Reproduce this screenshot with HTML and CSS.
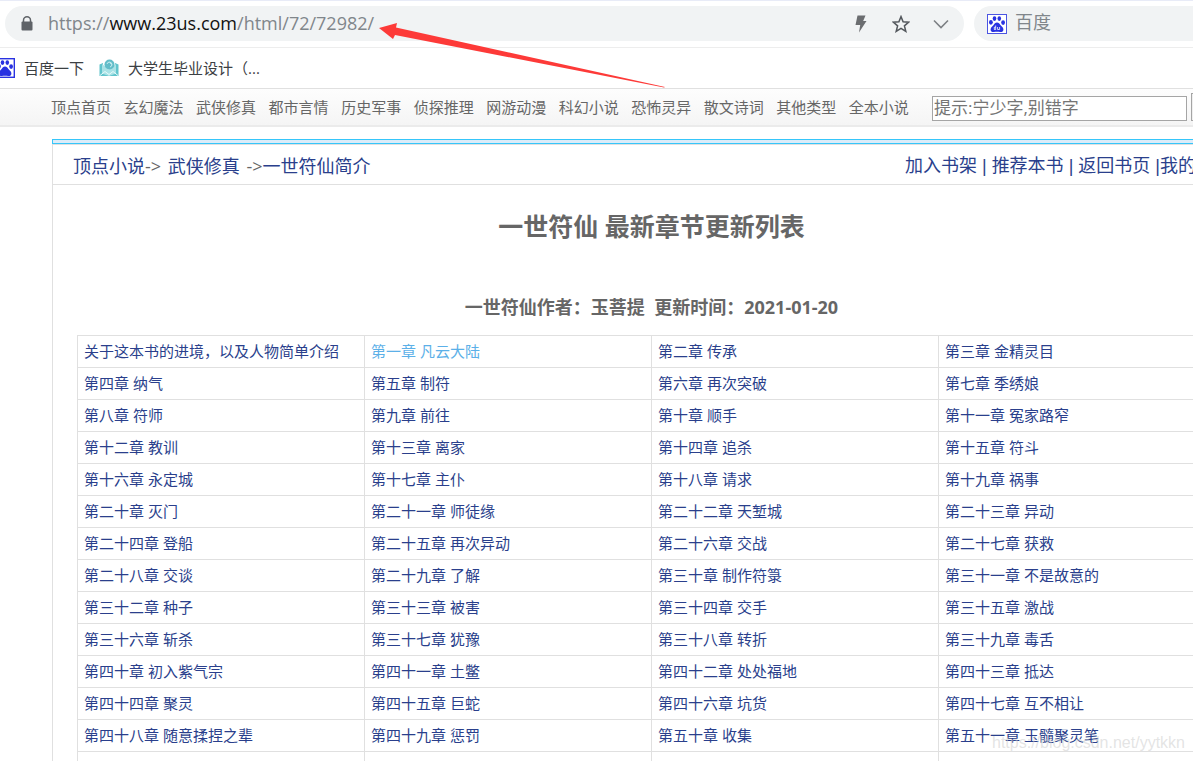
FILE: index.html
```html
<!DOCTYPE html>
<html lang="zh-CN">
<head>
<meta charset="utf-8">
<title>一世符仙 最新章节更新列表</title>
<link rel="stylesheet" href="styles.css">
</head>
<body>
<svg class="defs" aria-hidden="true">
  <symbol id="paw" viewBox="0 0 20 20">
    <ellipse cx="3.9" cy="8.3" rx="1.9" ry="2.4"/>
    <ellipse cx="7.5" cy="4.6" rx="1.8" ry="2.4"/>
    <ellipse cx="12.3" cy="4.6" rx="1.8" ry="2.4"/>
    <ellipse cx="16.1" cy="8.6" rx="1.9" ry="2.4"/>
    <path d="M10 8.6c1.700 0 2.500 1.200 3.400 2.400 1.100 1.400 3 2.400 3 4.400 0 2.100-1.600 2.700-3.300 2.500-1.100-.1-2-.2-3.100-.2s-2 .1-3.100.2c-1.700.2-3.300-.4-3.300-2.500 0-2 1.900-3 3-4.400.9-1.200 1.700-2.400 3.400-2.400z"/>
  </symbol>
</svg>

<header class="browser">
  <div class="toolbar">
    <div class="address">
      <svg class="lock" viewBox="0 0 12 15" aria-hidden="true"><path d="M2.500 6V4.300a3.500 3.500 0 0 1 7 0V6" fill="none" stroke="#5f6368" stroke-width="1.500"/><rect x=".5" y="5.500" width="11" height="9" rx="1" fill="#5f6368"/></svg>
      <span class="url">https://<b class="host">www.23us.com</b>/html/72/72982/</span>
      <button class="tool" aria-label="极速模式"><svg class="bolt" viewBox="0 0 12 18"><path d="M2.500.5h8L8.200 6H11.500L4 17.500l1.200-7.500H.5z" fill="#6b6d70"/></svg></button>
      <button class="tool" aria-label="收藏"><svg class="star" viewBox="0 0 18 18"><path d="M9 1.600l2.100 5.200 5.600.4-4.300 3.600 1.400 5.500L9 13.300l-4.800 3 1.400-5.500L1.300 7.200l5.600-.4z" fill="none" stroke="#54585d" stroke-width="1.500"/></svg></button>
      <button class="tool" aria-label="展开"><svg class="chevron" viewBox="0 0 16 10"><path d="M1 1.500l7 7 7-7" fill="none" stroke="#7d8084" stroke-width="1.600"/></svg></button>
    </div>
    <div class="engine">
      <svg class="engine-icon" viewBox="0 0 20 20" aria-hidden="true"><rect x=".5" y=".5" width="19" height="19" fill="#fff" stroke="#4b55e2"/><use href="#paw" fill="#2932e1"/><path d="M8.700 11.500v4M8.700 13.200H7.300v2.300h1.400M10.600 13v2.500h2V13" fill="none" stroke="#fff" stroke-width=".8"/></svg>
      <span>百度</span>
    </div>
  </div>
  <div class="bookmarks">
    <a class="bookmark" href="#"><svg class="baidu-icon" viewBox="0 0 20 20" aria-hidden="true"><rect x=".7" y=".7" width="18.600" height="18.600" fill="#fff" stroke="#2932e1" stroke-width="1.400"/><use href="#paw" fill="#2932e1"/></svg><span>百度一下</span></a>
    <a class="bookmark" href="#"><svg class="book-icon" viewBox="0 0 20 18" aria-hidden="true"><path d="M.5 5.500L4 4v10l6 2.500L16 14V4l3.500 1.500V17H.5z" fill="#61c4cc"/><path d="M3 5l7 5.500L17 5v9.500L10 17l-7-2.500z" fill="#a9e2e6"/><circle cx="10.500" cy="5.500" r="5" fill="#62bdc9"/><path d="M8 5a2.500 2.500 0 1 1 3 3M10.500 3.500l2.500 2" fill="none" stroke="#c8eef0"/><path d="M1 16.500l5-4 4 3 4-3 5 4" fill="none" stroke="#e7fafa"/></svg><span>大学生毕业设计（...</span></a>
  </div>
</header>

<div class="topnav">
  <nav class="categories">
    <a href="#">顶点首页</a><a href="#">玄幻魔法</a><a href="#">武侠修真</a><a href="#">都市言情</a><a href="#">历史军事</a><a href="#">侦探推理</a><a href="#">网游动漫</a><a href="#">科幻小说</a><a href="#">恐怖灵异</a><a href="#">散文诗词</a><a href="#">其他类型</a><a href="#">全本小说</a>
  </nav>
  <form class="search">
    <input class="search-box" type="text" aria-label="搜索" placeholder="提示:宁少字,别错字">
    <button class="search-button" type="button" aria-label="搜索"></button>
  </form>
</div>

<main class="book">
  <div class="crumbs">
    <div><a href="#">顶点小说</a>-&gt; <a class="genre" href="#">武侠修真</a> -&gt;<a href="#">一世符仙简介</a></div>
    <div class="actions"><a href="#">加入书架</a> | <a href="#">推荐本书</a> | <a href="#">返回书页</a> |<a href="#">我的书架</a></div>
  </div>
  <h1 class="title">一世符仙 最新章节更新列表</h1>
  <h2 class="author">一世符仙作者：玉菩提&nbsp; 更新时间：2021-01-20</h2>
  <table class="chapters">
    <tbody>
      <tr><td><a href="#">关于这本书的进境，以及人物简单介绍</a></td><td><a class="active" href="#">第一章 凡云大陆</a></td><td><a href="#">第二章 传承</a></td><td><a href="#">第三章 金精灵目</a></td></tr>
      <tr><td><a href="#">第四章 纳气</a></td><td><a href="#">第五章 制符</a></td><td><a href="#">第六章 再次突破</a></td><td><a href="#">第七章 季绣娘</a></td></tr>
      <tr><td><a href="#">第八章 符师</a></td><td><a href="#">第九章 前往</a></td><td><a href="#">第十章 顺手</a></td><td><a href="#">第十一章 冤家路窄</a></td></tr>
      <tr><td><a href="#">第十二章 教训</a></td><td><a href="#">第十三章 离家</a></td><td><a href="#">第十四章 追杀</a></td><td><a href="#">第十五章 符斗</a></td></tr>
      <tr><td><a href="#">第十六章 永定城</a></td><td><a href="#">第十七章 主仆</a></td><td><a href="#">第十八章 请求</a></td><td><a href="#">第十九章 祸事</a></td></tr>
      <tr><td><a href="#">第二十章 灭门</a></td><td><a href="#">第二十一章 师徒缘</a></td><td><a href="#">第二十二章 天堑城</a></td><td><a href="#">第二十三章 异动</a></td></tr>
      <tr><td><a href="#">第二十四章 登船</a></td><td><a href="#">第二十五章 再次异动</a></td><td><a href="#">第二十六章 交战</a></td><td><a href="#">第二十七章 获救</a></td></tr>
      <tr><td><a href="#">第二十八章 交谈</a></td><td><a href="#">第二十九章 了解</a></td><td><a href="#">第三十章 制作符箓</a></td><td><a href="#">第三十一章 不是故意的</a></td></tr>
      <tr><td><a href="#">第三十二章 种子</a></td><td><a href="#">第三十三章 被害</a></td><td><a href="#">第三十四章 交手</a></td><td><a href="#">第三十五章 激战</a></td></tr>
      <tr><td><a href="#">第三十六章 斩杀</a></td><td><a href="#">第三十七章 犹豫</a></td><td><a href="#">第三十八章 转折</a></td><td><a href="#">第三十九章 毒舌</a></td></tr>
      <tr><td><a href="#">第四十章 初入紫气宗</a></td><td><a href="#">第四十一章 土鳖</a></td><td><a href="#">第四十二章 处处福地</a></td><td><a href="#">第四十三章 抵达</a></td></tr>
      <tr><td><a href="#">第四十四章 聚灵</a></td><td><a href="#">第四十五章 巨蛇</a></td><td><a href="#">第四十六章 坑货</a></td><td><a href="#">第四十七章 互不相让</a></td></tr>
      <tr><td><a href="#">第四十八章 随意揉捏之辈</a></td><td><a href="#">第四十九章 惩罚</a></td><td><a href="#">第五十章 收集</a></td><td><a href="#">第五十一章 玉髓聚灵笔</a></td></tr>
      <tr><td></td><td></td><td></td><td></td></tr>
    </tbody>
  </table>
</main>

<svg class="arrow" viewBox="0 0 290 68" aria-hidden="true"><path d="M1 6L19 1 18 5.500 287 65 286 65.500 17 13 15 17z" fill="#fd3a38"/></svg>
<div class="watermark">https://blog.csdn.net/yytkkn</div>
</body>
</html>
```
FILE: styles.css
```css
*, *::before { box-sizing: border-box; }

body {
  position: relative;
  height: 100vh;
  margin: 0;
  overflow: hidden;
  background: #fff;
  color: #666;
  font-family: "Open Sans", "Noto Sans CJK SC", sans-serif;
  font-size: 15px;
}

a { color: inherit; text-decoration: none; }
button { border: 0; padding: 0; background: none; }
svg { display: block; flex: none; }
.defs { position: absolute; width: 0; height: 0; }

.toolbar {
  display: flex;
  gap: 10px;
  height: 48px;
  padding: 5px 0 6px 5px;
  border-top: 1px solid #e8ebf7;
  border-bottom: 1px solid #ededed;
}
.address, .engine {
  display: flex;
  align-items: center;
  height: 35px;
  border-radius: 18px;
  background: #f1f3f4;
}
.address { flex: 1; padding: 0 3px 0 16px; }
.lock { width: 12px; height: 15px; }
.url {
  flex: 1;
  margin-left: 15px;
  color: #80868b;
  font-size: 18px;
  line-height: 35px;
  white-space: nowrap;
}
.host { color: #111; font-weight: 400; }
.tool { display: grid; place-items: center; width: 40px; height: 35px; }
.bolt { width: 12px; height: 18px; }
.star { width: 18px; height: 18px; }
.chevron { width: 16px; height: 10px; }
.engine {
  width: 219px;
  gap: 8px;
  padding-left: 13px;
  border-radius: 18px 0 0 18px;
  color: #80868b;
  font-size: 18px;
  line-height: 33px;
}
.engine span { padding-bottom: 2px; }
.engine-icon { width: 20px; height: 20px; }

.bookmarks {
  display: flex;
  align-items: center;
  gap: 15px;
  height: 40px;
  color: #3c4043;
}
.bookmark { display: flex; align-items: center; gap: 9px; white-space: nowrap; }
.bookmark span { padding-bottom: 2px; }
.baidu-icon { width: 20px; height: 20px; margin-left: -5px; }
.book-icon { width: 20px; height: 18px; }

.topnav {
  display: flex;
  align-items: center;
  gap: 23px;
  height: 39px;
  padding-left: 51px;
  border-top: 1px solid #e0e0e0;
  border-bottom: 2px solid #ebebeb;
  background: linear-gradient(#fdfdfd, #f5f5f5);
}
.categories {
  display: flex;
  flex: none;
  justify-content: space-between;
  width: 858px;
  padding-bottom: 2px;
}
.search { display: flex; flex: none; align-items: end; gap: 4px; }
.search-box {
  width: 255px;
  height: 25px;
  padding: 0 1px 2px;
  border: 1px solid #a5a5a5;
  background: #fff;
  font: inherit;
  font-size: 17px;
}
.search-box::placeholder { color: #757575; }
.search-button {
  width: 50px;
  height: 28px;
  border: 1px solid #a5a5a5;
  background: #efefef;
}

.book {
  width: calc(100% + 6px);
  margin: 12px 0 0 52px;
  border: 1px solid #e0e0e0;
  border-top: 0;
}
.book::before {
  content: "";
  display: block;
  height: 5px;
  margin: 0 -1px;
  border: 1px solid #36c6fa;
  background: #dcecf9;
}
.crumbs {
  display: flex;
  justify-content: space-between;
  height: 41px;
  padding: 0 18px 0 20px;
  border-top: 1px solid #e0e0e0;
  border-bottom: 1px solid #e0e0e0;
  font-size: 18px;
  line-height: 42px;
  white-space: nowrap;
}
.crumbs a, .chapters a { color: #2a3f8c; }
.genre { padding: 0 2px; }
.actions {
  color: #2a3f8c;
  font-family: "Liberation Sans", "Noto Sans CJK SC", sans-serif;
}
.title {
  margin: 23px 0 0;
  font-size: 25px;
  line-height: 36px;
  text-align: center;
}
.author {
  margin: 48px 0 13px;
  font-size: 18px;
  line-height: 30px;
  text-align: center;
}
.chapters {
  width: calc(100% - 48px);
  margin: 0 24px;
  border-collapse: collapse;
  table-layout: fixed;
}
.chapters td {
  height: 32px;
  padding: 0 6px 2px;
  border: 1px solid #e0e0e0;
  line-height: 28px;
}
.chapters .active { color: #5cb0e8; }

.arrow { position: absolute; left: 378px; top: 22px; width: 290px; height: 68px; }
.watermark {
  position: absolute;
  right: 8px;
  bottom: 8px;
  color: rgba(205, 205, 205, 0.55);
  font: 16px/20px "Liberation Sans", sans-serif;
}
```
